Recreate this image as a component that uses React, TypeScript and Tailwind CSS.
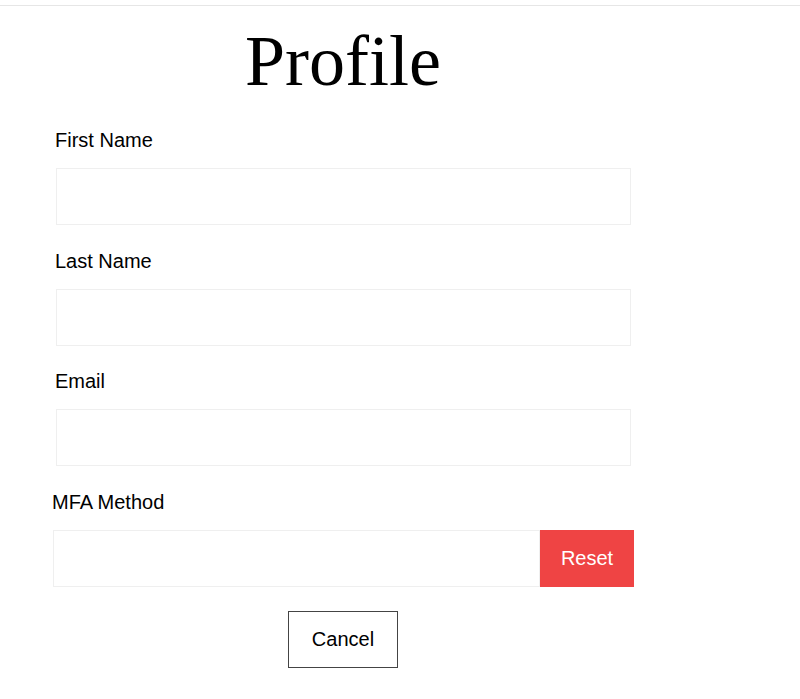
const fields = ["First Name", "Last Name", "Email"];

export default function App() {
  return (
    <div className="min-h-screen bg-white font-['Liberation_Sans',Arial,sans-serif] text-black">
      {/* top bar line */}
      <div className="h-[6px] border-b border-[#e6e6e6]" />

      <div className="ml-[55px] w-[576px] pt-[19px]">
        <h1 className="text-center font-['Liberation_Serif','Times_New_Roman',serif] text-[72px] leading-[72px] font-normal">
          Profile
        </h1>

        <div className="mt-[31px] flex flex-col gap-[23.5px]">
          {fields.map((label) => (
            <div key={label} className="flex flex-col gap-[16px]">
              <label className="text-[20px] leading-[24px]">{label}</label>
              <input
                type="text"
                className="ml-px h-[57px] w-[575px] border border-[#efefef] bg-white px-3 text-[20px] outline-none"
              />
            </div>
          ))}

          {/* MFA method */}
          <div className="-ml-[3px] flex flex-col gap-[16px]">
            <label className="text-[20px] leading-[24px]">MFA Method</label>
            <div className="ml-px flex h-[57px] w-[581px]">
              <input
                type="text"
                readOnly
                className="h-full flex-1 border border-[#efefef] bg-white px-3 text-[20px] outline-none"
              />
              <button className="h-full w-[94px] bg-[#ef4444] text-[20px] text-white">
                Reset
              </button>
            </div>
          </div>
        </div>

        <div className="mt-[24px] flex justify-center">
          <button className="h-[57px] w-[110px] border border-[#444] bg-white text-[20px] text-black">
            Cancel
          </button>
        </div>
      </div>
    </div>
  );
}
